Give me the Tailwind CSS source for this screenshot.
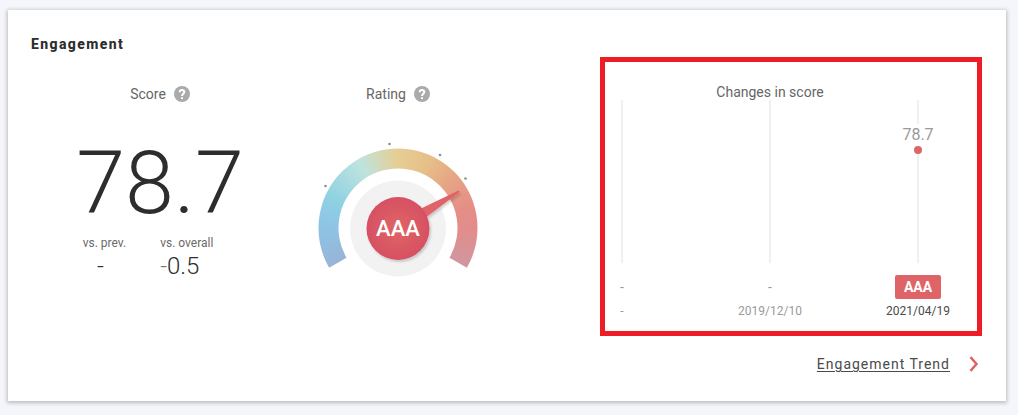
<!DOCTYPE html>
<html lang="en">
<head>
    <meta charset="UTF-8" />
    <meta name="viewport" content="width=device-width, initial-scale=1.0">
    <title>Engagement</title>
    <script src="https://cdn.jsdelivr.net/npm/@tailwindcss/browser@4"></script>
</head>
<body class="bg-[#f5f6fb] font-['Roboto',sans-serif] text-[#2d2d2d] pt-[10px] pl-2 pr-3 pb-3">

    <section class="bg-white shadow-[0_1px_4px_1px_rgba(0,0,0,0.24)] pt-6 pb-7">

        <h2 class="px-[23px] text-sm leading-5 font-extrabold tracking-[1.4px]">Engagement</h2>

        <div class="mt-[3px] pl-[33px] pr-6 grid grid-cols-[238fr_238fr_83fr_382fr]">

            <!-- Score -->
            <div class="pt-7 flex flex-col items-center">
                <div class="flex items-center gap-2">
                    <h3 class="text-sm leading-[18px] text-[#666]">Score</h3>
                    <button type="button" aria-label="About score" class="size-4 rounded-full bg-[#aaaaaa] text-white">
                        <svg viewBox="0 0 16 16" class="size-4" fill="none" stroke="currentColor" stroke-width="2">
                            <path d="M5.700 6.300C5.700 4.800 6.700 4 8 4s2.300.8 2.300 2.100C10.300 7.700 8 7.700 8 10" />
                            <path d="M8 11.200v1.900" />
                        </svg>
                    </button>
                </div>
                <p class="mt-9 text-[88px] leading-[88px] font-light">78.7</p>
                <dl class="mt-2 pr-6 flex gap-[34px]">
                    <div>
                        <dt class="text-xs leading-4 text-[#6a6a6a]">vs. prev.</dt>
                        <dd class="pr-2 text-2xl leading-[30px] font-light text-center">-</dd>
                    </div>
                    <div>
                        <dt class="text-xs leading-4 text-[#6a6a6a]">vs. overall</dt>
                        <dd class="text-2xl leading-[30px] font-light"><span class="text-[#777]">-</span>0.5</dd>
                    </div>
                </dl>
            </div>

            <!-- Rating -->
            <div class="pt-7 flex flex-col items-center">
                <div class="flex items-center gap-2">
                    <h3 class="text-sm leading-[18px] text-[#666]">Rating</h3>
                    <button type="button" aria-label="About rating" class="size-4 rounded-full bg-[#aaaaaa] text-white">
                        <svg viewBox="0 0 16 16" class="size-4" fill="none" stroke="currentColor" stroke-width="2">
                            <path d="M5.700 6.300C5.700 4.800 6.700 4 8 4s2.300.8 2.300 2.100C10.300 7.700 8 7.700 8 10" />
                            <path d="M8 11.200v1.900" />
                        </svg>
                    </button>
                </div>
                <svg viewBox="0 0 180 150" class="mt-[25px] w-[180px] h-[150px]" role="img" aria-label="Rating AAA">
                    <defs>
                        <clipPath id="arc">
                            <path d="M21.150 139.750A79.500 79.500 0 1 1 158.850 139.750L141.500 129.750A59.500 59.500 0 1 0 38.500 129.750Z" />
                        </clipPath>
                        <radialGradient id="knob">
                            <stop offset="0" stop-color="#e06666" />
                            <stop offset="1" stop-color="#d65062" />
                        </radialGradient>
                        <filter id="shadow" x="-20%" y="-20%" width="150%" height="150%">
                            <feDropShadow dx="1.500" dy="2" stdDeviation="1" flood-opacity="0.18" />
                        </filter>
                    </defs>
                    <g clip-path="url(#arc)">
                        <foreignObject x="10" y="20" width="160" height="160">
                            <div class="size-[160px] bg-[conic-gradient(from_180deg,#98b4d6_60deg,#8ec4e6_92deg,#90d2e2_115deg,#bfe3de_150deg,#e5cf96_178deg,#e6bf88_205deg,#e5a585_228deg,#e58d87_255deg,#e28d8b_272deg,#d0979f_300deg)]"></div>
                        </foreignObject>
                    </g>
                    <g fill="#8a8f96">
                        <circle cx="17.500" cy="58" r="1.300" />
                        <circle cx="81.500" cy="16" r="1.300" />
                        <circle cx="132" cy="27" r="1.300" />
                        <circle cx="157.500" cy="50.500" r="1.300" />
                    </g>
                    <circle cx="90" cy="100.500" r="48" fill="#f2f2f2" />
                    <g filter="url(#shadow)">
                        <path d="M112 81L150.500 62.500Q152.500 63 150.500 65L117 90Z" fill="#df6467" />
                        <circle cx="90" cy="100.500" r="31.500" fill="url(#knob)" />
                    </g>
                    <text x="90" y="108" text-anchor="middle" fill="#fff" class="text-[22px] font-medium">AAA</text>
                </svg>
            </div>

            <!-- Changes in score -->
            <div class="col-start-4 border-[5px] border-[#ee1c25] pt-[21px] pb-3 pl-4 pr-[58px]">
                <h3 class="text-sm leading-[18px] text-center text-[#666]">Changes in score</h3>
                <ol class="-mt-px flex justify-between text-xs leading-4 text-[#9a9a9a] whitespace-nowrap">
                    <li class="w-[2px] flex flex-col items-center">
                        <div class="w-[2px] h-[163px] bg-[#f0f0f0]"></div>
                        <span class="mt-3 leading-6 text-sm">-</span>
                        <span class="mt-1">-</span>
                    </li>
                    <li class="w-[2px] flex flex-col items-center">
                        <div class="w-[2px] h-[163px] bg-[#f0f0f0]"></div>
                        <span class="mt-3 leading-6 text-sm">-</span>
                        <time class="mt-1">2019/12/10</time>
                    </li>
                    <li class="w-[2px] flex flex-col items-center">
                        <div class="w-[2px] h-[163px] bg-[#f0f0f0] flex flex-col items-center">
                            <span class="mt-6 bg-white text-base leading-[22px]">78.7</span>
                            <span class="size-2 shrink-0 rounded-full bg-[#df6467]"></span>
                        </div>
                        <span class="mt-3 rounded-xs bg-[#df6467] px-[9px] text-sm leading-6 font-bold text-white">AAA</span>
                        <time class="mt-1 text-[#4a4a4a]">2021/04/19</time>
                    </li>
                </ol>
            </div>
        </div>

        <div class="mt-[19px] pr-[27px] flex justify-end">
            <a href="#" class="flex items-center gap-[19px] text-sm leading-[18px] tracking-[1px] text-[#4a4a4a]">
                <span class="underline underline-offset-2">Engagement Trend</span>
                <svg viewBox="0 0 10 16" class="w-[10px] h-4" fill="none" stroke="#df6467" stroke-width="2.500">
                    <path d="M1.500 1.200L7.500 8L1.500 14.800" />
                </svg>
            </a>
        </div>
    </section>

</body>
</html>
